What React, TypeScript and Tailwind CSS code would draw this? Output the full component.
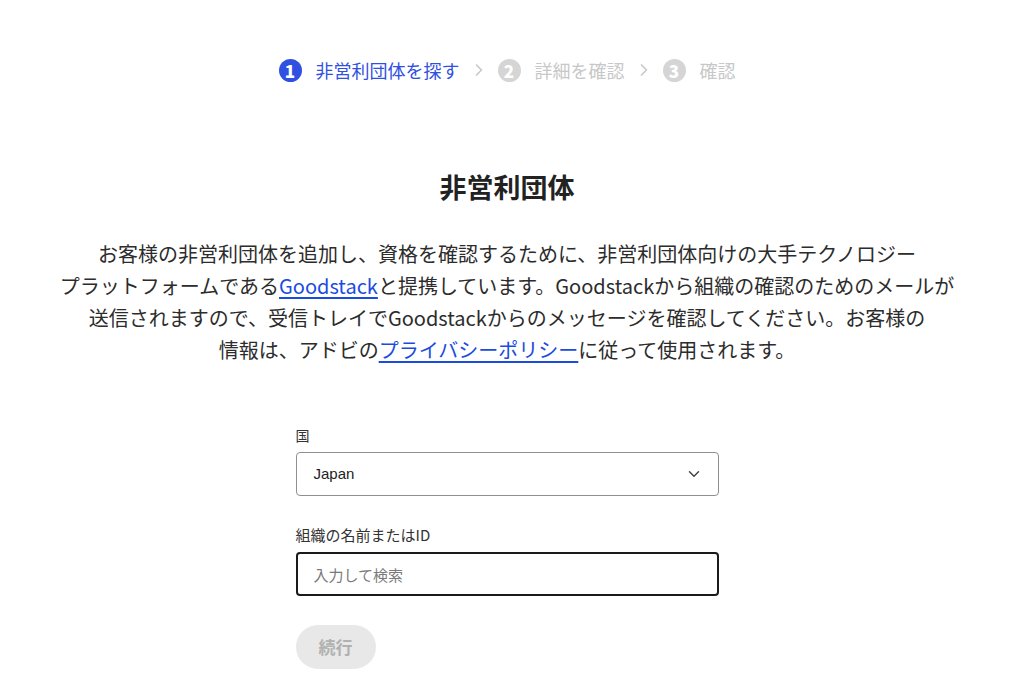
import { ChevronDown, ChevronRight } from 'lucide-react';

const font = { fontFamily: '"Noto Sans CJK JP", "Noto Sans", sans-serif' };

function Step({ n, label, active }: { n: number; label: string; active?: boolean }) {
  return (
    <div className="flex items-center gap-[14px]">
      <span
        className={`flex h-[23px] w-[23px] items-center justify-center rounded-full text-[17px] font-black leading-none text-white ${
          active ? 'bg-[#2f50e1]' : 'bg-[#d5d5d5]'
        }`}
      >
        {n}
      </span>
      <span className={`text-[18px] ${active ? 'text-[#2f50e1]' : 'text-[#c8c8c8]'}`}>{label}</span>
    </div>
  );
}

export default function App() {
  return (
    <div className="min-h-screen bg-white pt-[57px] pr-[10px] text-[#2c2c2c]" style={font}>
      <div className="flex h-[26px] items-center justify-center gap-[9px]">
        <Step n={1} label="非営利団体を探す" active />
        <ChevronRight className="h-[20px] w-[20px] text-[#c8c8c8]" strokeWidth={2} />
        <Step n={2} label="詳細を確認" />
        <ChevronRight className="h-[20px] w-[20px] text-[#c8c8c8]" strokeWidth={2} />
        <Step n={3} label="確認" />
      </div>

      <h1 className="mt-[86px] text-center text-[27px] font-bold leading-[36px] text-[#222]">非営利団体</h1>

      <p className="mt-[33px] text-center text-[20px] leading-[32px]">
        お客様の非営利団体を追加し、資格を確認するために、非営利団体向けの大手テクノロジー
        <br />
        プラットフォームである
        <a href="#" className="text-[#1b4ce0] underline underline-offset-[3px]">
          Goodstack
        </a>
        と提携しています。Goodstackから組織の確認のためのメールが
        <br />
        送信されますので、受信トレイでGoodstackからのメッセージを確認してください。お客様の
        <br />
        情報は、アドビの
        <a href="#" className="text-[#1b4ce0] underline underline-offset-[3px]">
          プライバシーポリシー
        </a>
        に従って使用されます。
      </p>

      <div className="mx-auto mt-[59px] w-[423px]">
        <label className="block text-[14px] leading-[20px] text-[#333]">国</label>
        <div className="mt-[7px] flex h-[44px] items-center justify-between rounded-[4px] border border-[#909090] pl-[17px] pr-[15px]">
          <span className="text-[15px] text-[#222]" style={{ fontFamily: '"Liberation Sans", Arial, sans-serif' }}>
            Japan
          </span>
          <ChevronDown className="h-[18px] w-[18px] text-[#444]" strokeWidth={2} />
        </div>

        <label className="mt-[29px] block text-[15px] leading-[20px] text-[#333]">組織の名前またはID</label>
        <input
          placeholder="入力して検索"
          className="mt-[7px] block h-[44px] w-full rounded-[4px] border-2 border-[#1a1a1a] pl-[16px] text-[15px] outline-none placeholder:text-[#7a7a7a]"
          style={font}
        />

        <button
          className="mt-[29px] flex h-[44px] w-[80px] items-center justify-center rounded-full bg-[#e8e8e8] text-[17px] font-bold text-[#b1b1b1]"
          style={font}
        >
          続行
        </button>
      </div>
    </div>
  );
}
